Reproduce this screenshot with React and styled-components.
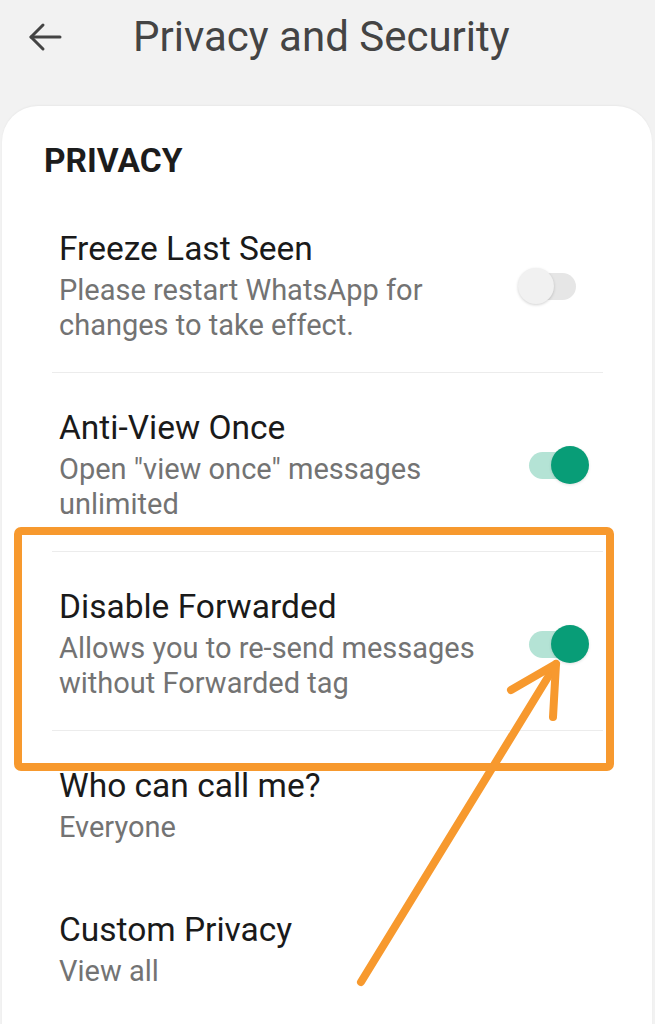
import React from "react";
import styled, { createGlobalStyle } from "styled-components";

const Global = createGlobalStyle`
  html, body { margin: 0; padding: 0; }
  body {
    background: #f2f2f2;
    font-family: Roboto, "Noto Sans", "Liberation Sans", sans-serif;
    -webkit-font-smoothing: antialiased;
  }
`;

const Page = styled.div`
  position: relative;
  width: 655px;
  height: 1024px;
  overflow: hidden;
  background: #f2f2f2;
`;

const Header = styled.header`
  height: 106px;
  display: flex;
  align-items: flex-start;
  padding-top: 12px;
  box-sizing: border-box;
`;

const BackButton = styled.button`
  width: 54px;
  height: 50px;
  margin-left: 18px;
  padding: 0;
  border: 0;
  background: transparent;
  display: flex;
  align-items: center;
  justify-content: center;
`;

const Title = styled.h1`
  margin: 0 0 0 61px;
  font-size: 42px;
  line-height: 50px;
  font-weight: 400;
  color: #444444;
  letter-spacing: 0;
`;

const Card = styled.main`
  margin: 0 3px 0 2px;
  background: #ffffff;
  border-radius: 36px 36px 0 0;
  padding-top: 35px;
  min-height: 900px;
  box-shadow: 0 -1px 2px rgba(0, 0, 0, 0.04);
`;

const SectionTitle = styled.h2`
  margin: 0 0 13px 42px;
  font-size: 33.5px;
  line-height: 40px;
  font-weight: 700;
  color: #1c1c1c;
`;

const List = styled.ul`
  list-style: none;
  margin: 0 49px 0 50px;
  padding: 0;
`;

const Row = styled.li`
  display: flex;
  align-items: center;
  padding: 35px 14px 29px 7px;
  border-bottom: ${(p) => (p.$divider ? "1px solid #ececec" : "1px solid transparent")};
`;

const Texts = styled.div`
  flex: 1;
  min-width: 0;
`;

const ItemTitle = styled.div`
  font-size: 33.5px;
  line-height: 40px;
  color: #1a1a1a;
`;

const ItemSub = styled.div`
  margin-top: 4px;
  font-size: 29px;
  line-height: 35px;
  color: #737373;
  max-width: 440px;
`;

const Switch = styled.div`
  position: relative;
  width: 73px;
  height: 38px;
  flex: none;
  margin-left: 12px;
`;

const Track = styled.div`
  position: absolute;
  left: 13px;
  top: 6px;
  width: 47px;
  height: 27px;
  border-radius: 14px;
  background: ${(p) => (p.$on ? "#b4e3d5" : "#e6e6e6")};
`;

const Thumb = styled.div`
  position: absolute;
  top: ${(p) => (p.$on ? "0" : "1px")};
  ${(p) => (p.$on ? "right: 0;" : "left: 2px;")}
  width: ${(p) => (p.$on ? "38px" : "36px")};
  height: ${(p) => (p.$on ? "38px" : "36px")};
  border-radius: 50%;
  background: ${(p) => (p.$on ? "#089d77" : "#f1f1f1")};
  box-shadow: 0 1px 3px rgba(0, 0, 0, ${(p) => (p.$on ? "0.12" : "0.18")});
`;

const Overlay = styled.svg`
  position: absolute;
  left: 0;
  top: 0;
  pointer-events: none;
`;

const Toggle = ({ on }) => (
  <Switch>
    <Track $on={on} />
    <Thumb $on={on} />
  </Switch>
);

const items = [
  { title: "Freeze Last Seen", sub: "Please restart WhatsApp for changes to take effect.", toggle: false, divider: true },
  { title: "Anti-View Once", sub: 'Open "view once" messages unlimited', toggle: true, divider: true },
  { title: "Disable Forwarded", sub: "Allows you to re-send messages without Forwarded tag", toggle: true, divider: true },
  { title: "Who can call me?", sub: "Everyone", divider: false },
  { title: "Custom Privacy", sub: "View all", divider: false },
];

export default function App() {
  return (
    <Page>
      <Global />
      <Header>
        <BackButton aria-label="Back">
          <svg width="36" height="30" viewBox="0 0 36 30" fill="none" stroke="#444" strokeWidth="3" strokeLinecap="round" strokeLinejoin="round">
            <path d="M33 15H4" />
            <path d="M16 3L4 15l12 12" />
          </svg>
        </BackButton>
        <Title>Privacy and Security</Title>
      </Header>
      <Card>
        <SectionTitle>PRIVACY</SectionTitle>
        <List>
          {items.map((it) => (
            <Row key={it.title} $divider={it.divider}>
              <Texts>
                <ItemTitle>{it.title}</ItemTitle>
                <ItemSub>{it.sub}</ItemSub>
              </Texts>
              {it.toggle !== undefined && <Toggle on={it.toggle} />}
            </Row>
          ))}
        </List>
      </Card>
      <Overlay width="655" height="1024" viewBox="0 0 655 1024">
        <rect x="18" y="531" width="592" height="236" rx="3" fill="none" stroke="#f7992e" strokeWidth="8" />
        <g stroke="#f7992e" strokeWidth="8" strokeLinecap="round" strokeLinejoin="round" fill="none">
          <path d="M361 982L556 664" />
          <path d="M511 690L556 664L553 717" />
        </g>
      </Overlay>
    </Page>
  );
}
